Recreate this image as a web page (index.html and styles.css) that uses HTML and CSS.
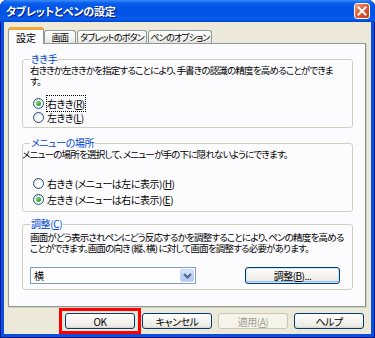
FILE: index.html
```html
<!DOCTYPE html>
<html lang="ja">
<head>
<meta charset="utf-8">
<title>タブレットとペンの設定</title>
<link rel="stylesheet" href="styles.css">
</head>
<body>
<div class="window">
  <div class="titlebar">
    <span class="title">タブレットとペンの設定</span>
    <span class="close">
      <svg width="14" height="14" viewBox="0 0 14 14"><path d="M3.5 3.5 L10.5 10.5 M10.5 3.5 L3.5 10.5" stroke="#fff" stroke-width="2" stroke-linecap="square"/></svg>
    </span>
  </div>
  <div class="client">
    <div class="tabs">
      <span class="tab sel">設定</span>
      <span class="tab t2">画面</span>
      <span class="tab t3">タブレットのボタン</span>
      <span class="tab t4">ペンのオプション</span>
    </div>
    <div class="panel">
      <fieldset class="group g1">
        <legend>きき手</legend>
        <p class="desc">右ききか左ききかを指定することにより、手書きの認識の精度を高めることができま<br>す。</p>
        <div class="radio"><span class="dot on"></span><span class="focus">右きき(<u>R</u>)</span></div>
        <div class="radio"><span class="dot"></span><span>左きき(<u>L</u>)</span></div>
      </fieldset>
      <fieldset class="group g2">
        <legend>メニューの場所</legend>
        <p class="desc">メニューの場所を選択して、メニューが手の下に隠れないようにできます。</p>
        <div class="radio"><span class="dot"></span><span>右きき (メニューは左に表示)(<u>H</u>)</span></div>
        <div class="radio"><span class="dot on"></span><span>左きき (メニューは右に表示)(<u>E</u>)</span></div>
      </fieldset>
      <fieldset class="group g3">
        <legend>調整(<u>C</u>)</legend>
        <p class="desc">画面がどう表示されペンにどう反応するかを調整することにより、ペンの精度を高める<br>ことができます。画面の向き (縦、横) に対して画面を調整する必要があります。</p>
        <div class="row">
          <div class="combo">
            <span class="value">横</span>
            <span class="drop"><svg width="9" height="6" viewBox="0 0 9 6"><path d="M1 1 L4.5 4.5 L8 1" stroke="#4D6185" stroke-width="2" fill="none"/></svg></span>
          </div>
          <button class="btn adjust">調整(<u>B</u>)...</button>
        </div>
      </fieldset>
    </div>
    <div class="buttons">
      <span class="mark"><button class="btn">OK</button></span>
      <button class="btn cancel">キャンセル</button>
      <button class="btn off">適用(<u>A</u>)</button>
      <button class="btn">ヘルプ</button>
    </div>
  </div>
</div>
</body>
</html>
```

FILE: styles.css
```css
* {
	box-sizing: border-box;
}
body {
	margin: 0;
	background: #fff;
	font-family: "Noto Sans CJK JP", "Liberation Sans", sans-serif;
	font-size: 10px;
	font-feature-settings: "palt";
	color: #000;
}
u {
	text-decoration: underline;
}

/* window frame */
.window {
	width: 375px;
	height: 338px;
	display: flex;
	flex-direction: column;
	background: #0A4FDD;
	border-radius: 7px 7px 0 0;
	box-shadow: inset 1px 0 #00169A, inset -1px 0 #00137F, inset 0 -1px #00137F;
	overflow: hidden;
}
.titlebar {
	height: 22px;
	flex: none;
	display: flex;
	align-items: center;
	justify-content: space-between;
	padding: 0 5px 0 6px;
	background: linear-gradient(#3C8CF8 0, #0A5FEE 3px, #0054E6 8px, #0052E4 14px, #0A5CEC 19px, #0047D6 22px);
	border-radius: 7px 7px 0 0;
}
.title {
	color: #fff;
	font-weight: bold;
	font-size: 11px;
	letter-spacing: -0.2px;
	text-shadow: 1px 1px #0A1A80;
}
.close {
	width: 16px;
	height: 16px;
	display: flex;
	align-items: center;
	justify-content: center;
	border: 1px solid #fff;
	border-radius: 3px;
	background: linear-gradient(135deg, #F29A7E, #E0603E 45%, #C4391A);
}

/* client area */
.client {
	flex: 1;
	margin: 0 4px 4px;
	padding: 5px 5px 0 4px;
	background: #ECE9D8;
	display: flex;
	flex-direction: column;
}
.tabs {
	height: 16px;
	display: flex;
	align-items: flex-end;
}
.tab {
	height: 13px;
	display: flex;
	align-items: center;
	justify-content: center;
	border: 1px solid #919B9C;
	border-bottom: none;
	border-radius: 3px 3px 0 0;
	background: linear-gradient(#FFFFFF, #F3F3EF 60%, #E6E5DD);
	white-space: nowrap;
	font-size: 9px;
	letter-spacing: -0.8px;
}
.tab.sel {
	width: 36px;
	height: 17px;
	margin-bottom: -1px;
	position: relative;
	z-index: 1;
	border-top: 3px solid #F1A839;
	background: #FCFCFE;
	font-size: 10px;
	letter-spacing: 0;
}
.t2 {
	width: 32px;
}
.t3 {
	width: 70px;
	margin-left: 1px;
}
.t4 {
	width: 64px;
	margin-left: 1px;
}
.panel {
	height: 264px;
	flex: none;
	padding: 9px 12px 0 13px;
	background: #FCFCFE;
	border: 1px solid #919B9C;
	border-right-color: #8A9192;
	box-shadow: 1px 1px 0 #D0CEBF;
}

/* group boxes */
.group {
	margin: 0;
	padding: 0 12px 3px 7px;
	border: 1px solid #D0D0BF;
	border-radius: 3px;
	min-inline-size: 0;
}
.group legend {
	padding: 0 1px;
	line-height: 12px;
	color: #0046D5;
	letter-spacing: -0.4px;
}
.desc {
	margin: 0;
	font-size: 9.5px;
	line-height: 11px;
	letter-spacing: -0.8px;
	white-space: nowrap;
}
.radio {
	height: 14px;
	display: flex;
	align-items: center;
	gap: 3px;
	padding-left: 3px;
	letter-spacing: -0.5px;
	white-space: nowrap;
}
.g1 .desc + .radio {
	margin-top: 9px;
}
.dot {
	width: 11px;
	height: 11px;
	border: 1px solid #1C5180;
	border-radius: 50%;
	background: radial-gradient(circle at 65% 65%, #FFFFFF 30%, #E3E2DA 90%);
	display: flex;
	align-items: center;
	justify-content: center;
}
.dot.on::after {
	content: "";
	width: 5px;
	height: 5px;
	border-radius: 50%;
	background: radial-gradient(circle at 35% 35%, #7BDB6C, #21A121 70%);
}
.focus {
	outline: 1px dotted #000;
	outline-offset: 0;
}

.g2 {
	margin-top: 9px;
	padding-bottom: 4px;
}
.g2 .desc {
	margin-left: -8px;
}
.g2 .radio {
	height: 16px;
}
.g2 .desc + .radio {
	margin-top: 15px;
}

.g3 {
	margin-top: 6px;
	padding-bottom: 5px;
}
.g3 .desc {
	padding-top: 2px;
}
.row {
	margin-top: 13px;
	height: 17px;
	display: flex;
	justify-content: space-between;
	align-items: center;
}
.combo {
	width: 166px;
	height: 17px;
	display: flex;
	align-items: center;
	justify-content: space-between;
	border: 1px solid #7F9DB9;
	background: #fff;
	padding: 0 1px 0 3px;
}
.drop {
	width: 14px;
	height: 13px;
	display: flex;
	align-items: center;
	justify-content: center;
	border-radius: 2px;
	background: linear-gradient(#DCE7FD, #C0D2FA 50%, #B2C6F5);
	border: 1px solid #C3D3FD;
}

/* push buttons */
.btn {
	height: 16px;
	width: 70px;
	padding: 0;
	font: inherit;
	letter-spacing: -0.5px;
	color: #000;
	border: 1px solid #003C74;
	border-radius: 3px;
	background: linear-gradient(#FFFFFF, #F4F3EE 50%, #ECEBE6 85%, #D8D2C6);
	display: flex;
	align-items: center;
	justify-content: center;
}
.btn.adjust {
	width: 95px;
	height: 17px;
	box-shadow: inset 0 0 0 1px #CEE7FF, inset 0 -1px 0 1px #98B8EA;
}
.btn.off {
	color: #A1A192;
	border-color: #C9C7BA;
	background: #F5F4EA;
}
.buttons {
	margin-top: 1px;
	height: 26px;
	display: flex;
	justify-content: flex-end;
	align-items: center;
	gap: 6px;
	padding-right: 2px;
}
.mark {
	border: 3px solid #F00;
	padding: 2px 3px;
	margin-right: -5px;
}
```
